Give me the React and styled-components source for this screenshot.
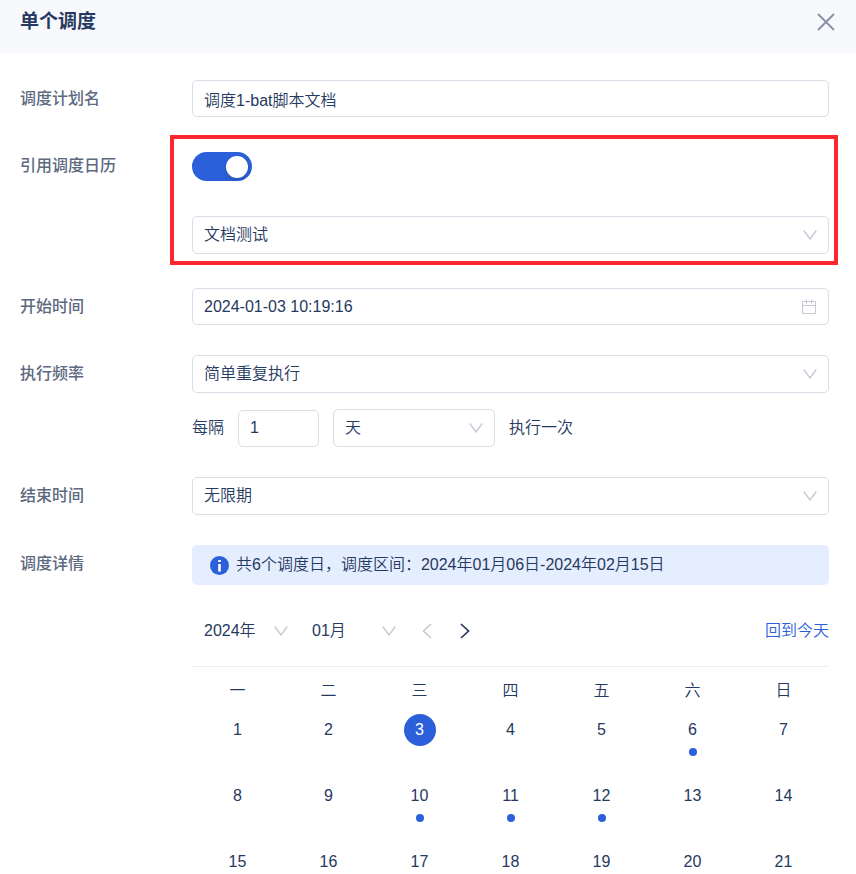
import React, { useState } from "react";
import styled, { createGlobalStyle } from "styled-components";

const weekdays = ["一", "二", "三", "四", "五", "六", "日"];
const weeks = [
    [1, 2, 3, 4, 5, 6, 7],
    [8, 9, 10, 11, 12, 13, 14],
    [15, 16, 17, 18, 19, 20, 21],
];
const scheduled = [6, 10, 11, 12];

const ArrowDown = () => (
    <svg width="14" height="10" viewBox="0 0 14 10" fill="none" stroke="currentColor" strokeWidth="1.3" aria-hidden="true">
        <path d="M0.7 0.5 L7 9 L13.3 0.5" />
    </svg>
);

const Select = ({ id, label, value, bare }) => (
    <SelectBox $bare={bare}>
        <select id={id} aria-label={label} defaultValue={value}>
            <option>{value}</option>
        </select>
        <ArrowDown />
    </SelectBox>
);

const App = () => {
    const [enabled, setEnabled] = useState(true);
    const [selected, setSelected] = useState(3);
    const handleSubmit = (e) => {
        e.preventDefault();
    }
    return (
        <Drawer>
            <GlobalStyle />
            <Header>
                <h1>单个调度</h1>
                <IconButton type="button" aria-label="关闭" $color="#8490a5">
                    <svg width="18" height="18" viewBox="0 0 18 18" fill="none" stroke="currentColor" strokeWidth="1.8">
                        <path d="M1 1 L17 17 M17 1 L1 17" />
                    </svg>
                </IconButton>
            </Header>
            <Form onSubmit={handleSubmit}>
                <FormItem>
                    <Label htmlFor="name">调度计划名</Label>
                    <TextInput id="name" type="text" defaultValue="调度1-bat脚本文档" />
                </FormItem>
                <FormItem $last="34px">
                    <Label htmlFor="useCalendar">引用调度日历</Label>
                    <Highlighted>
                        <SwitchLine>
                            <Switch
                                id="useCalendar"
                                type="checkbox"
                                role="switch"
                                checked={enabled}
                                onChange={(e) => setEnabled(e.target.checked)}
                            />
                        </SwitchLine>
                        <Select label="调度日历" value="文档测试" />
                    </Highlighted>
                </FormItem>
                <FormItem>
                    <Label htmlFor="start">开始时间</Label>
                    <DateBox>
                        <input id="start" type="text" defaultValue="2024-01-03 10:19:16" />
                        <svg width="16" height="16" viewBox="0 0 16 16" fill="none" stroke="currentColor" aria-hidden="true">
                            <path d="M1.5 2.5 H14.5 V14.5 H1.5 Z M1.5 6.5 H14.5 M5.5 0.5 V4.5 M10.5 0.5 V4.5" />
                        </svg>
                    </DateBox>
                </FormItem>
                <FormItem>
                    <Label htmlFor="frequency">执行频率</Label>
                    <Stack>
                        <Select id="frequency" value="简单重复执行" />
                        <Interval>
                            <span>每隔</span>
                            <TextInput type="text" aria-label="间隔" defaultValue="1" />
                            <Select label="单位" value="天" />
                            <span>执行一次</span>
                        </Interval>
                    </Stack>
                </FormItem>
                <FormItem>
                    <Label htmlFor="end">结束时间</Label>
                    <Select id="end" value="无限期" />
                </FormItem>
                <FormItem>
                    <Label as="span">调度详情</Label>
                    <div>
                        <Notice>
                            <svg width="19" height="19" viewBox="0 0 19 19" aria-hidden="true">
                                <circle cx="9.5" cy="9.5" r="9.5" fill="#2b60da" />
                                <rect x="8.2" y="4" width="2.6" height="2" fill="#fff" />
                                <rect x="8.2" y="8" width="2.6" height="7.6" fill="#fff" />
                            </svg>
                            共6个调度日，调度区间：2024年01月06日-2024年02月15日
                        </Notice>
                        <Toolbar>
                            <Select label="年" value="2024年" bare="84px" />
                            <Select label="月" value="01月" bare="84px" />
                            <Pager>
                                <IconButton type="button" aria-label="上个月" $color="#c3c8d1">
                                    <svg width="10" height="16" viewBox="0 0 10 16" fill="none" stroke="currentColor" strokeWidth="1.5">
                                        <path d="M9 1 L1.5 8 L9 15" />
                                    </svg>
                                </IconButton>
                                <IconButton type="button" aria-label="下个月" $color="#22355b">
                                    <svg width="10" height="16" viewBox="0 0 10 16" fill="none" stroke="currentColor" strokeWidth="1.7">
                                        <path d="M1 1 L8.5 8 L1 15" />
                                    </svg>
                                </IconButton>
                            </Pager>
                            <TodayLink href="#today">回到今天</TodayLink>
                        </Toolbar>
                        <Calendar>
                            <thead>
                                <tr>
                                    {weekdays.map((day) => <th key={day} scope="col">{day}</th>)}
                                </tr>
                            </thead>
                            <tbody>
                                {weeks.map((week) => (
                                    <tr key={week[0]}>
                                        {week.map((day) => (
                                            <td key={day}>
                                                <Day type="button" $active={day === selected} onClick={() => setSelected(day)}>
                                                    {day}
                                                </Day>
                                                {scheduled.includes(day) && <Dot />}
                                            </td>
                                        ))}
                                    </tr>
                                ))}
                            </tbody>
                        </Calendar>
                    </div>
                </FormItem>
            </Form>
        </Drawer>
    )
}

const GlobalStyle = createGlobalStyle`
*{
    box-sizing: border-box;
}
body{
    margin: 0;
    background: #fff;
    color: #263960;
    font-family: "Liberation Sans", "Noto Sans CJK SC", sans-serif;
    font-size: 16px;
    font-weight: 350;
    line-height: 26px;
}
button, input, select{
    font: inherit;
    color: inherit;
}
`
const Drawer = styled.main`
    height: 100vh;
    overflow: hidden;
`
const Header = styled.header`
    display: flex;
    justify-content: space-between;
    align-items: center;
    height: 53px;
    padding: 0 21px 9px 20px;
    background: #f8f9fd;
    h1{
        margin: 0;
        font-size: 19px;
        font-weight: 700;
    }
`
const IconButton = styled.button`
    display: flex;
    padding: 0;
    border: none;
    background: transparent;
    color: ${(props) => props.$color};
    cursor: pointer;
`
const Form = styled.form`
    padding: 27px 27px 0 20px;
`
const FormItem = styled.div`
    display: grid;
    grid-template-columns: 172px minmax(0, 1fr);
    align-items: start;
    margin-bottom: ${(props) => props.$last || "30px"};
`
const Label = styled.label`
    line-height: 37px;
    color: #5c6980;
    font-weight: 500;
`
const TextInput = styled.input`
    width: 100%;
    height: 37px;
    padding: 0 11px;
    border: 1px solid #d8dde8;
    border-radius: 5px;
    background: #fff;
    outline: none;
    &:focus-visible{
        border-color: #2b60da;
    }
`
const DateBox = styled.div`
    display: flex;
    align-items: center;
    height: 37px;
    padding: 0 11px;
    border: 1px solid #d8dde8;
    border-radius: 5px;
    color: #c3c8d1;
    input{
        flex: 1;
        min-width: 0;
        padding: 0;
        border: none;
        outline: none;
        background: transparent;
        color: #263960;
    }
`
const SelectBox = styled.div`
    display: grid;
    align-items: center;
    width: ${(props) => props.$bare || "auto"};
    color: #c3c8d1;
    select{
        grid-area: 1 / 1;
        width: 100%;
        height: 38px;
        padding: ${(props) => (props.$bare ? "0" : "0 11px")};
        border: ${(props) => (props.$bare ? "none" : "1px solid #d8dde8")};
        border-radius: 5px;
        background: transparent;
        color: #263960;
        appearance: none;
        outline: none;
        cursor: pointer;
    }
    svg{
        grid-area: 1 / 1;
        justify-self: end;
        margin-right: ${(props) => (props.$bare ? "0" : "12px")};
        pointer-events: none;
    }
`
/* red frame drawn around the calendar controls */
const Highlighted = styled.div`
    position: relative;
    display: grid;
    gap: 30px;
    &::after{
        content: "";
        position: absolute;
        inset: -12px -9px -11px -22px;
        border: 4px solid #ff272e;
        pointer-events: none;
    }
`
const SwitchLine = styled.div`
    display: flex;
    align-items: center;
    height: 39px;
`
const Switch = styled.input`
    display: flex;
    align-items: center;
    width: 60px;
    height: 29px;
    margin: 0;
    padding: 0 4px;
    border-radius: 15px;
    background: #bfc5d0;
    appearance: none;
    cursor: pointer;
    &::before{
        content: "";
        width: 22px;
        height: 22px;
        border-radius: 50%;
        background: #fff;
        box-shadow: 0 2px 4px rgba(0, 35, 11, 0.2);
    }
    &:checked{
        justify-content: flex-end;
        background: #2b60da;
    }
`
const Stack = styled.div`
    display: grid;
    gap: 16px;
`
const Interval = styled.div`
    display: flex;
    align-items: center;
    gap: 14px;
    ${TextInput}{
        width: 81px;
    }
    ${SelectBox}{
        width: 162px;
    }
`
const Notice = styled.div`
    display: flex;
    align-items: center;
    gap: 7px;
    height: 40px;
    padding: 0 18px;
    border-radius: 5px;
    background: #e5eeff;
`
const Toolbar = styled.div`
    display: flex;
    align-items: center;
    gap: 24px;
    height: 82px;
    padding: 10px 0 0 12px;
    border-bottom: 1px solid #eceef1;
`
const Pager = styled.div`
    display: flex;
    gap: 28px;
    padding-left: 2px;
`
const TodayLink = styled.a`
    margin-left: auto;
    color: #2b60da;
    text-decoration: none;
`
const Calendar = styled.table`
    width: 100%;
    table-layout: fixed;
    border-collapse: collapse;
    th{
        height: 47px;
        padding: 0;
        font-weight: 350;
    }
    td{
        height: 66px;
        padding: 0;
        vertical-align: top;
    }
`
const Day = styled.button`
    display: block;
    width: 32px;
    height: 32px;
    margin: 0 auto 2px;
    padding: 0;
    border: none;
    border-radius: 50%;
    background: ${(props) => (props.$active ? "#2b60da" : "transparent")};
    color: ${(props) => (props.$active ? "#fff" : "inherit")};
    font-weight: ${(props) => (props.$active ? 500 : 400)};
    cursor: pointer;
`
const Dot = styled.span`
    display: block;
    width: 8px;
    height: 8px;
    margin: 0 auto;
    border-radius: 50%;
    background: #2b60da;
`
export default App;
